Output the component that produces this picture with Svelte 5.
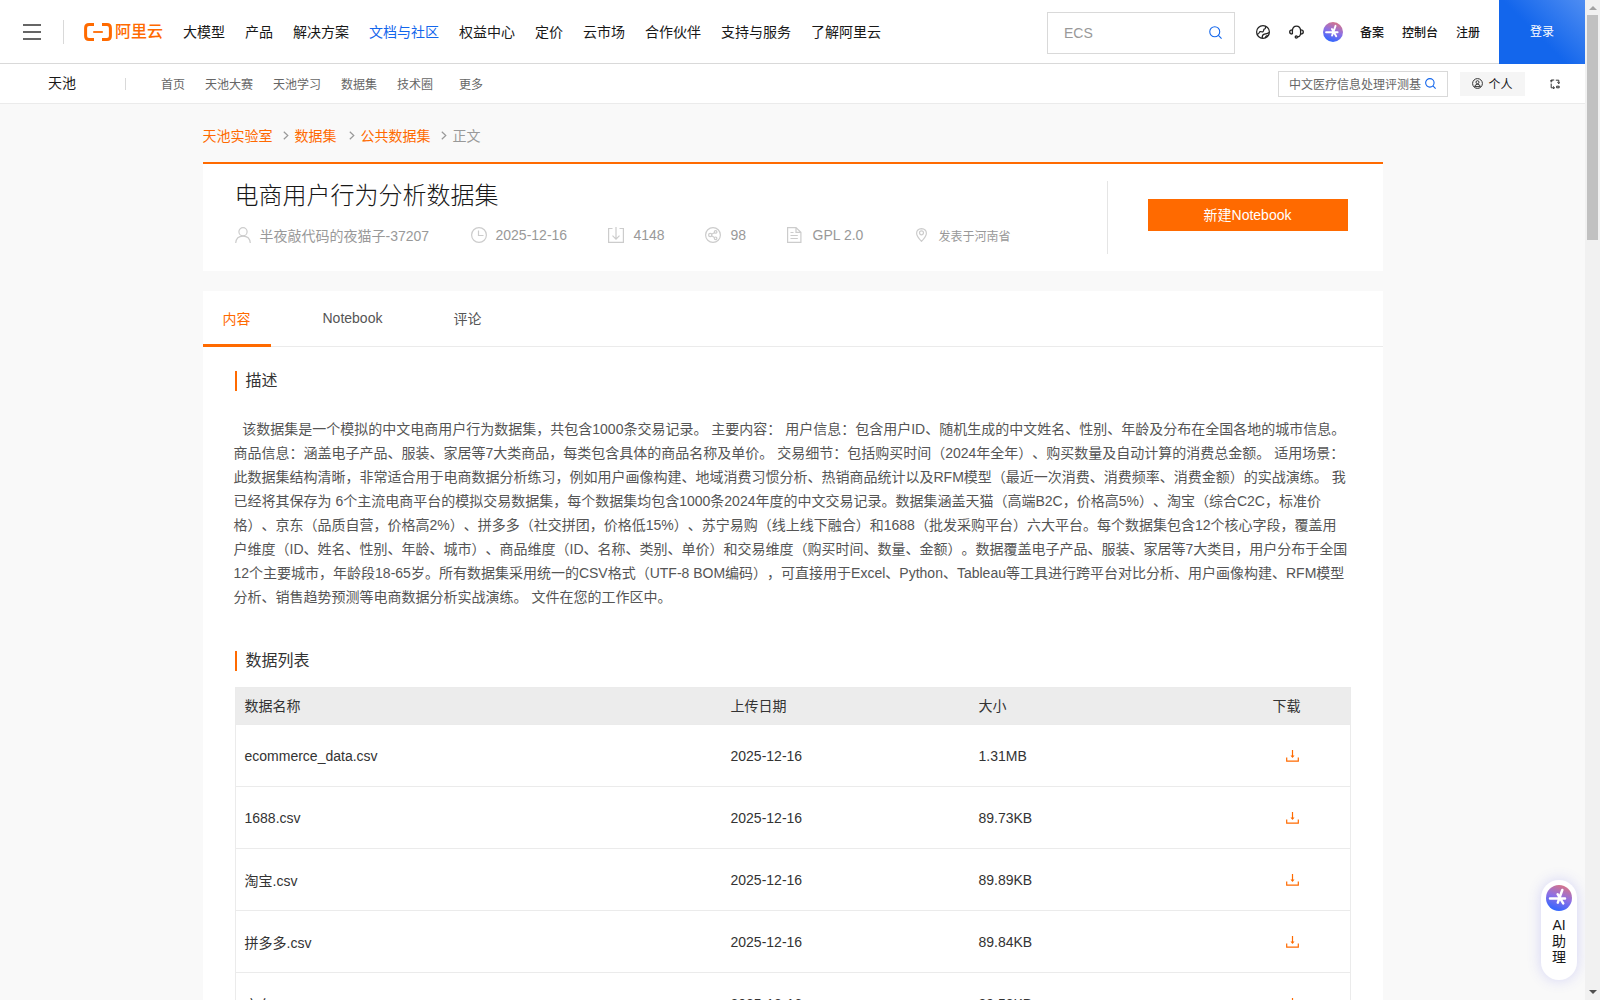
<script lang="ts">
  const nav = ['大模型', '产品', '解决方案', '文档与社区', '权益中心', '定价', '云市场', '合作伙伴', '支持与服务', '了解阿里云'];
  const subNav = ['首页', '天池大赛', '天池学习', '数据集', '技术圈', '更多'];
  const tabs = ['内容', 'Notebook', '评论'];
  let activeTab = 0;

  const description = [
    '\u00a0\u00a0该数据集是一个模拟的中文电商用户行为数据集，共包含1000条交易记录。 主要内容： 用户信息：包含用户ID、随机生成的中文姓名、性别、年龄及分布在全国各地的城市信息。',
    '商品信息：涵盖电子产品、服装、家居等7大类商品，每类包含具体的商品名称及单价。 交易细节：包括购买时间（2024年全年）、购买数量及自动计算的消费总金额。 适用场景：',
    '此数据集结构清晰，非常适合用于电商数据分析练习，例如用户画像构建、地域消费习惯分析、热销商品统计以及RFM模型（最近一次消费、消费频率、消费金额）的实战演练。 我',
    '已经将其保存为 6个主流电商平台的模拟交易数据集，每个数据集均包含1000条2024年度的中文交易记录。数据集涵盖天猫（高端B2C，价格高5%）、淘宝（综合C2C，标准价',
    '格）、京东（品质自营，价格高2%）、拼多多（社交拼团，价格低15%）、苏宁易购（线上线下融合）和1688（批发采购平台）六大平台。每个数据集包含12个核心字段，覆盖用',
    '户维度（ID、姓名、性别、年龄、城市）、商品维度（ID、名称、类别、单价）和交易维度（购买时间、数量、金额）。数据覆盖电子产品、服装、家居等7大类目，用户分布于全国',
    '12个主要城市，年龄段18-65岁。所有数据集采用统一的CSV格式（UTF-8 BOM编码），可直接用于Excel、Python、Tableau等工具进行跨平台对比分析、用户画像构建、RFM模型',
    '分析、销售趋势预测等电商数据分析实战演练。 文件在您的工作区中。'
  ];

  const files = [
    { name: 'ecommerce_data.csv', date: '2025-12-16', size: '1.31MB' },
    { name: '1688.csv', date: '2025-12-16', size: '89.73KB' },
    { name: '淘宝.csv', date: '2025-12-16', size: '89.89KB' },
    { name: '拼多多.csv', date: '2025-12-16', size: '89.84KB' },
    { name: '京东.csv', date: '2025-12-16', size: '89.58KB' }
  ];
</script>

{#snippet search(size)}
  <svg class="search-icon" width={size} height={size} viewBox="0 0 12 12">
    <circle cx="5.3" cy="5.3" r="4.6" />
    <path d="M8.7 8.7l2.9 2.9" />
  </svg>
{/snippet}

{#snippet star(size)}
  <svg width={size} height={size} viewBox="0 0 26 26">
    <defs>
      <linearGradient id="star-{size}" x1="0.75" y1="0" x2="0.4" y2="1">
        <stop offset="0" stop-color="#dc7480" />
        <stop offset="0.5" stop-color="#8e70e4" />
        <stop offset="1" stop-color="#2f66ff" />
      </linearGradient>
    </defs>
    <circle cx="13" cy="13" r="13" fill="url(#star-{size})" />
    <path d="M4 13.4h15M16.3 5l-4.5 12.6M11.6 9.2l5.6 9.2" fill="none" stroke="#fff" stroke-width="2.5" stroke-linecap="round" />
  </svg>
{/snippet}

<div class="page">
  <header class="topbar">
    <div class="burger"><i></i><i></i><i></i></div>
    <div class="logo">
      <svg width="28" height="18" viewBox="0 0 28 18" fill="none" stroke="#ff6a00">
        <path d="M10 1.5H5Q1.6 1.5 1.6 5v8q0 3.5 3.4 3.5h5M18 1.5h5q3.4 0 3.4 3.5v8q0 3.5-3.4 3.5h-5" stroke-width="3" />
        <path d="M9.2 9h9.6" stroke-width="1.8" />
      </svg>
      <span>阿里云</span>
    </div>
    <nav class="nav">
      {#each nav as item}
        <a href="#top" class:active={item === '文档与社区'}>{item}</a>
      {/each}
    </nav>
    <div class="search-box">
      <span>ECS</span>
      {@render search(13)}
    </div>
    <svg class="globe" width="14" height="14" viewBox="0 0 14 14">
      <circle cx="7" cy="7" r="6.4" />
      <path d="M.9 9.2Q2.8 9.2 3.3 7.6T5.6 6.8 7.9 4.4Q9.8 4.2 9.6 1.4M6.2 13.2q-.3-3.4 2.2-4t4.8-1.6M9.4 13q-.2-2.2 2.4-2.4" />
    </svg>
    <svg class="headset" width="15" height="14" viewBox="0 0 15 14">
      <path d="M3.4 9V5.4Q3.8 1.2 7.5 1.2t4.1 4.2V9q-.4 2.6-3.2 3" />
      <path d="M3.4 4.9Q.7 4.9.7 7t2.7 2.1M11.6 4.9q2.7 0 2.7 2.1t-2.7 2.1" />
      <circle cx="7.3" cy="12" r="1.1" />
    </svg>
    <div class="ai-icon">{@render star(20)}</div>
    <div class="links">
      <a href="#top">备案</a>
      <a href="#top">控制台</a>
      <a href="#top">注册</a>
    </div>
    <button class="login">登录</button>
  </header>

  <div class="subbar">
    <strong>天池</strong>
    <nav>
      {#each subNav as item}
        <a href="#top">{item}</a>
      {/each}
    </nav>
    <div class="sub-search">
      <span>中文医疗信息处理评测基</span>
      {@render search(11)}
    </div>
    <button class="personal">
      <svg width="11" height="11" viewBox="0 0 11 11">
        <circle cx="5.5" cy="5.5" r="4.9" />
        <circle cx="5.5" cy="4.2" r="1.5" />
        <path d="M2.7 8.6q.3-2.3 2.8-2.3t2.8 2.3z" />
      </svg>
      个人
    </button>
    <svg class="switch" width="10" height="10" viewBox="0 0 10 10">
      <path d="M4.2 1H1.2v2.4M.3 1.8h2.4M1.2 4.6v4.2h3.2M3 7.4l1.5 1.4L3 10M5.8 1.2h3v3.4M7.3 3.2l1.5 1.4L10 3.2M6.6 7.2h2.6v1.6H6.6z" />
    </svg>
  </div>

  <main>
    <div class="crumbs">
      <a href="#top">天池实验室</a>
      <svg width="6" height="9" viewBox="0 0 6 9"><path d="M.8.7l4 3.8-4 3.8" /></svg>
      <a href="#top">数据集</a>
      <svg class="second" width="6" height="9" viewBox="0 0 6 9"><path d="M.8.7l4 3.8-4 3.8" /></svg>
      <a href="#top">公共数据集</a>
      <svg width="6" height="9" viewBox="0 0 6 9"><path d="M.8.7l4 3.8-4 3.8" /></svg>
      <span>正文</span>
    </div>

    <section class="card summary">
      <div class="info">
        <h1>电商用户行为分析数据集</h1>
        <div class="meta">
          <div class="author">
            <svg width="16" height="16" viewBox="0 0 16 16"><circle cx="8" cy="4.7" r="4.1" /><path d="M.7 16q.6-6.8 7.3-6.8t7.3 6.8" /></svg>
            半夜敲代码的夜猫子-37207
          </div>
          <div class="date">
            <svg width="16" height="16" viewBox="0 0 16 16"><circle cx="8" cy="8" r="7.4" /><path d="M7.5 3.5v5h5" /></svg>
            2025-12-16
          </div>
          <div class="downloads">
            <svg width="16" height="16" viewBox="0 0 16 16"><path d="M4.5 1.5H.6v13.9h14.8V1.5h-3.9M8 0v12M4.5 8.7L8 12.2l3.5-3.5" /></svg>
            4148
          </div>
          <div class="shares">
            <svg width="16" height="16" viewBox="0 0 16 16"><circle cx="8" cy="8" r="7.4" /><circle cx="5.2" cy="8" r="1.6" /><circle cx="10.6" cy="4.9" r="1.3" /><circle cx="10.6" cy="11.3" r="1.3" /><path d="M6.6 7.3l2.8-1.6M6.6 8.8l2.8 1.7" /></svg>
            98
          </div>
          <div class="license">
            <svg width="15" height="16" viewBox="0 0 15 16"><path d="M9 .6H.6v14.8h13.3V5.3zM9 .6v4.7h4.9M3.5 5.5h3M3.5 8.5h7.3M3.5 11.5h7.3" /></svg>
            GPL 2.0
          </div>
          <div class="place">
            <svg width="11" height="14" viewBox="0 0 11 14"><path d="M5.5 13.3Q.6 8.3.6 5.2.8.9 5.5.6q4.7.3 4.9 4.6 0 3.1-4.9 8.1z" /><circle cx="5.5" cy="4.8" r="2" /></svg>
            发表于河南省
          </div>
        </div>
      </div>
      <div class="action">
        <button>新建Notebook</button>
      </div>
    </section>

    <section class="card detail">
      <div class="tabs">
        {#each tabs as tab, i}
          <button class:active={activeTab === i} on:click={() => (activeTab = i)}>{tab}</button>
        {/each}
      </div>

      <div class="content">
        <h2>描述</h2>
        <div class="description">
          {#each description as line}
            <div>{line}</div>
          {/each}
        </div>

        <h2>数据列表</h2>
        <div class="table">
          <div class="row head">
            <span>数据名称</span>
            <span>上传日期</span>
            <span>大小</span>
            <span class="download">下载</span>
          </div>
          {#each files as file}
            <div class="row">
              <span>{file.name}</span>
              <span>{file.date}</span>
              <span>{file.size}</span>
              <span class="download">
                <svg width="13" height="12" viewBox="0 0 13 12"><path d="M.7 7.5v3.7h11.6V7.5M6.5 0v7" /><path class="tip" d="M4.5 5.6h4L6.5 8z" /></svg>
              </span>
            </div>
          {/each}
        </div>
      </div>
    </section>
  </main>
</div>

<div class="assistant">
  {@render star(26)}
  <span>AI</span>
  <span>助</span>
  <span>理</span>
</div>

<div class="scrollbar">
  <i class="up"></i>
  <div class="thumb"></div>
  <i class="down"></i>
</div>

<style>
  :global(body) {
    background: #f9f9f9;
    overflow: hidden;
  }
  .page,
  .assistant,
  button {
    font-family: "Liberation Sans", "Noto Sans CJK SC", sans-serif;
    font-size: 14px;
    text-spacing-trim: space-all;
  }
  .page {
    width: 1585px;
    height: 1000px;
    overflow: hidden;
    background: #f9f9f9;
    color: #333;
  }
  .page *,
  .assistant {
    box-sizing: border-box;
  }
  a {
    color: inherit;
    text-decoration: none;
  }
  button {
    border: 0;
    padding: 0;
    cursor: pointer;
  }
  svg {
    flex-shrink: 0;
    fill: none;
    stroke-width: 1.2;
  }
  .topbar {
    display: flex;
    align-items: center;
    height: 64px;
    background: #fff;
    border-bottom: 1px solid #d9d9d9;
    color: #181818;
    white-space: nowrap;
  }
  .burger {
    display: flex;
    flex-direction: column;
    justify-content: center;
    gap: 5px;
    width: 64px;
    height: 24px;
    padding-left: 23px;
    border-right: 1px solid #d9d9d9;
  }
  .burger i {
    width: 18px;
    height: 2px;
    background: #666;
  }
  .logo {
    display: flex;
    align-items: center;
    width: 119px;
    padding-left: 20px;
    color: #ff6a00;
    font-size: 16px;
    font-weight: 500;
  }
  .logo span {
    margin-left: 3px;
    line-height: 18px;
  }
  .nav {
    display: flex;
    gap: 20px;
    width: 864px;
    padding-bottom: 2px;
  }
  .nav .active {
    color: #1366ec;
  }
  .search-box {
    display: flex;
    align-items: center;
    justify-content: space-between;
    width: 188px;
    height: 42px;
    margin-top: 2px;
    padding: 0 12px 0 16px;
    border: 1px solid #d9d9d9;
    color: #999;
  }
  .search-icon {
    stroke: #1366ec;
  }
  .search-box .search-icon {
    margin-bottom: 1px;
    stroke-width: 1;
  }
  .globe {
    margin-left: 21px;
    stroke: #222;
  }
  .headset {
    margin-left: 19px;
    stroke: #222;
    stroke-width: 1.3;
  }
  .ai-icon {
    display: flex;
    margin-left: 19px;
  }
  .links {
    display: flex;
    gap: 18px;
    margin-left: 17px;
    font-size: 12px;
    font-weight: 500;
  }
  .login {
    width: 86px;
    height: 64px;
    margin: 0 0 -1px auto;
    padding-bottom: 3px;
    background: linear-gradient(45deg, #1366ec 45%, #4f8df2);
    color: #fff;
    font-size: 12px;
  }
  .subbar {
    display: flex;
    align-items: center;
    height: 40px;
    background: #fff;
    border-bottom: 1px solid #ebebeb;
    font-size: 12px;
    white-space: nowrap;
  }
  .subbar strong {
    width: 126px;
    height: 12px;
    padding-left: 48px;
    border-right: 1px solid #d9d9d9;
    color: #181818;
    font-size: 14px;
    font-weight: 400;
    line-height: 10px;
  }
  .subbar nav {
    display: flex;
    gap: 20px;
    width: 1152px;
    padding-left: 35px;
    color: #666;
  }
  .subbar nav a:last-child {
    margin-left: 6px;
  }
  .sub-search {
    display: flex;
    align-items: center;
    justify-content: space-between;
    width: 170px;
    height: 26px;
    padding: 0 11px 0 10px;
    border: 1px solid #d9d9d9;
    color: #666;
  }
  .personal {
    display: flex;
    align-items: center;
    justify-content: center;
    gap: 5px;
    width: 65px;
    height: 24px;
    margin-left: 12px;
    background: #f5f5f5;
    color: #181818;
    font-size: 12px;
  }
  .personal svg,
  .switch {
    stroke: #333;
    stroke-width: 1;
  }
  .switch {
    margin-left: 25px;
  }
  main {
    width: 1180px;
    margin: 0 auto;
  }
  .crumbs {
    display: flex;
    align-items: center;
    height: 58px;
    padding-top: 3px;
    color: #999;
  }
  .crumbs a {
    color: #ff6a00;
  }
  .crumbs svg {
    margin: 2px 6px 0 10px;
    stroke: #999;
  }
  .crumbs .second {
    margin-left: 12px;
  }
  .card {
    background: #fff;
  }
  .summary {
    display: flex;
    height: 109px;
    border-top: 2px solid #ff6a00;
  }
  .info {
    width: 904px;
    padding: 14px 0 0 32px;
  }
  h1 {
    margin: 0;
    color: #181818;
    font-size: 24px;
    font-weight: 300;
    line-height: 36px;
  }
  .meta {
    display: flex;
    align-items: center;
    height: 20px;
    margin-top: 11px;
    color: #999;
    white-space: nowrap;
  }
  .meta div {
    display: flex;
    align-items: center;
    gap: 9px;
  }
  .meta svg {
    stroke: #ccc;
  }
  .author {
    width: 236px;
  }
  .date {
    width: 137px;
  }
  .downloads {
    width: 97px;
  }
  .shares {
    width: 82px;
  }
  .license {
    width: 129px;
  }
  .meta .downloads,
  .meta .shares {
    gap: 10px;
  }
  .meta .license {
    gap: 11px;
  }
  .meta .place {
    gap: 12px;
    font-size: 12px;
  }
  .action {
    height: 73px;
    margin-top: 17px;
    padding: 18px 0 0 40px;
    border-left: 1px solid #e5e5e5;
  }
  .action button {
    width: 200px;
    height: 32px;
    padding-bottom: 2px;
    background: #ff6a00;
    color: #fff;
  }
  .detail {
    margin-top: 20px;
    height: 760px;
  }
  .tabs {
    display: flex;
    height: 56px;
    border-bottom: 1px solid #ebebeb;
  }
  .tabs button {
    height: 56px;
    margin-right: 31px;
    padding: 1px 20px 0;
    border-bottom: 3px solid transparent;
    background: none;
    color: #555;
  }
  .tabs .active {
    margin-right: 32px;
    border-color: #ff6a00;
    color: #ff6a00;
  }
  .content {
    padding: 24px 32px 0;
  }
  h2 {
    height: 20px;
    margin: 0;
    padding-left: 9px;
    border-left: 2px solid #ff6a00;
    font-size: 16px;
    font-weight: 400;
    line-height: 20px;
  }
  .description {
    height: 234px;
    margin: 26px 0 0 -1px;
    color: #555;
    line-height: 24px;
    white-space: nowrap;
  }
  .description div:first-child {
    padding-left: 1px;
  }
  .table {
    width: 1116px;
    margin-top: 16px;
    border: 1px solid #ebebeb;
  }
  .row {
    display: grid;
    grid-template-columns: 486px 248px 241px 1fr;
    align-items: center;
    height: 62px;
    padding-left: 9px;
    border-bottom: 1px solid #ebebeb;
  }
  .head {
    height: 37px;
    padding-bottom: 2px;
    background: #ececec;
  }
  .download {
    display: flex;
    justify-content: center;
    padding-left: 16px;
  }
  .head .download {
    padding-left: 4px;
  }
  .download svg {
    stroke: #ff6a00;
  }
  .download .tip {
    fill: #ff6a00;
    stroke: none;
  }
  .assistant {
    position: absolute;
    left: 1541px;
    top: 880px;
    display: flex;
    flex-direction: column;
    align-items: center;
    width: 36px;
    height: 100px;
    padding-top: 5px;
    border-radius: 18px;
    background: #fff;
    box-shadow: 0 0 14px rgba(80, 80, 230, 0.22);
    color: #181818;
    line-height: 16px;
  }
  .assistant svg {
    margin-bottom: 6px;
  }
  .scrollbar {
    position: absolute;
    left: 1585px;
    top: 0;
    display: flex;
    flex-direction: column;
    align-items: center;
    width: 15px;
    height: 1000px;
    background: #f1f1f1;
  }
  .thumb {
    width: 11px;
    height: 225px;
    margin: 5px 0 auto;
    background: #c1c1c1;
  }
  .scrollbar i {
    border: 4px solid transparent;
  }
  .scrollbar .up {
    margin-top: 2px;
    border-bottom-color: #a3a3a3;
  }
  .scrollbar .down {
    margin-bottom: 2px;
    border-top-color: #505050;
  }
</style>
